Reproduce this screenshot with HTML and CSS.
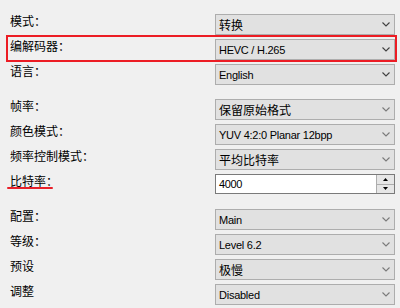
FILE: index.html
```html
<!DOCTYPE html>
<html lang="zh-CN">
<head>
<meta charset="utf-8">
<title>编码设置</title>
<link rel="stylesheet" href="styles.css">
</head>
<body>
<div class="panel">
  <div class="group">
    <div class="row">
      <span class="label">模式：</span>
      <div class="select cjk"><span>转换</span><svg class="chev" viewBox="0 0 8 5"><polyline points="0.5,0.5 4,4 7.5,0.5"/></svg></div>
    </div>
    <div class="row">
      <div class="highlight"></div>
      <span class="label">编解码器：</span>
      <div class="select"><span>HEVC / H.265</span><svg class="chev" viewBox="0 0 8 5"><polyline points="0.5,0.5 4,4 7.5,0.5"/></svg></div>
    </div>
    <div class="row">
      <span class="label">语言：</span>
      <div class="select"><span>English</span><svg class="chev" viewBox="0 0 8 5"><polyline points="0.5,0.5 4,4 7.5,0.5"/></svg></div>
    </div>
  </div>
  <div class="group">
    <div class="row">
      <span class="label">帧率：</span>
      <div class="select cjk dim"><span>保留原始格式</span><svg class="chev" viewBox="0 0 8 5"><polyline points="0.5,0.5 4,4 7.5,0.5"/></svg></div>
    </div>
    <div class="row">
      <span class="label">颜色模式：</span>
      <div class="select dim"><span>YUV 4:2:0 Planar 12bpp</span><svg class="chev" viewBox="0 0 8 5"><polyline points="0.5,0.5 4,4 7.5,0.5"/></svg></div>
    </div>
    <div class="row">
      <span class="label">频率控制模式：</span>
      <div class="select cjk dim"><span>平均比特率</span><svg class="chev" viewBox="0 0 8 5"><polyline points="0.5,0.5 4,4 7.5,0.5"/></svg></div>
    </div>
    <div class="row">
      <span class="label">比特率：</span>
      <div class="underline"></div>
      <div class="spin">
        <span class="spin-value">4000</span>
        <div class="spin-buttons">
          <div class="spin-btn"><svg viewBox="0 0 5 3"><polygon points="0,3 2.5,0 5,3"/></svg></div>
          <div class="spin-btn"><svg viewBox="0 0 5 3"><polygon points="0,0 5,0 2.5,3"/></svg></div>
        </div>
      </div>
    </div>
  </div>
  <div class="group">
    <div class="row">
      <span class="label">配置：</span>
      <div class="select dim"><span>Main</span><svg class="chev" viewBox="0 0 8 5"><polyline points="0.5,0.5 4,4 7.5,0.5"/></svg></div>
    </div>
    <div class="row">
      <span class="label">等级：</span>
      <div class="select dim"><span>Level 6.2</span><svg class="chev" viewBox="0 0 8 5"><polyline points="0.5,0.5 4,4 7.5,0.5"/></svg></div>
    </div>
    <div class="row">
      <span class="label">预设</span>
      <div class="select cjk dim"><span>极慢</span><svg class="chev" viewBox="0 0 8 5"><polyline points="0.5,0.5 4,4 7.5,0.5"/></svg></div>
    </div>
    <div class="row">
      <span class="label">调整</span>
      <div class="select dim"><span>Disabled</span><svg class="chev" viewBox="0 0 8 5"><polyline points="0.5,0.5 4,4 7.5,0.5"/></svg></div>
    </div>
  </div>
</div>
</body>
</html>
```
FILE: styles.css
```css
html, body {
  margin: 0;
  padding: 0;
  background: #f0f0f0;
}
body {
  width: 400px;
  height: 308px;
  overflow: hidden;
  font-family: "Noto Sans CJK SC", "Liberation Sans", sans-serif;
  color: #000;
}
.panel {
  padding: 14px 5px 0 10px;
  display: flex;
  flex-direction: column;
  gap: 14px;
}
.group {
  display: flex;
  flex-direction: column;
  gap: 4px;
}
.row {
  position: relative;
  display: grid;
  grid-template-columns: 205px 180px;
  height: 21px;
}
.label {
  font-size: 12px;
  line-height: 14px;
  padding-top: 0;
  white-space: nowrap;
}
.select {
  box-sizing: border-box;
  height: 21px;
  border: 1px solid #adadad;
  background: #e1e1e1;
  display: flex;
  align-items: center;
  justify-content: space-between;
  padding: 0 4px 0 3px;
  font-family: "Liberation Sans", sans-serif;
  font-size: 11px;
  letter-spacing: -0.25px;
}
.select.cjk {
  font-family: "Noto Sans CJK SC", sans-serif;
  font-size: 12px;
  letter-spacing: 0;
}
.chev {
  width: 8px;
  height: 5px;
  fill: none;
  stroke: #404040;
  stroke-width: 1.1;
  margin-right: 0;
}
.dim .chev {
  stroke: #7a7a7a;
}
.highlight {
  position: absolute;
  left: -4px;
  top: -4px;
  width: 391px;
  height: 27px;
  box-sizing: border-box;
  border: 2px solid #ec1c24;
  pointer-events: none;
}
.underline {
  position: absolute;
  left: -3px;
  top: 13px;
  width: 46px;
  height: 2px;
  border-radius: 1px;
  background: #e8202a;
}
.spin {
  box-sizing: border-box;
  height: 20px;
  border: 1px solid #7a7a7a;
  background: #fff;
  display: flex;
  align-items: center;
  justify-content: space-between;
  padding-left: 3px;
  font-family: "Liberation Sans", sans-serif;
  font-size: 11px;
  letter-spacing: -0.4px;
}
.spin-buttons {
  align-self: stretch;
  width: 17px;
  display: flex;
  flex-direction: column;
  border-left: 1px solid #adadad;
}
.spin-btn {
  flex: 1;
  display: flex;
  align-items: center;
  justify-content: center;
  background: #e6e6e6;
}
.spin-btn + .spin-btn {
  border-top: 1px solid #adadad;
}
.spin-btn svg {
  width: 5px;
  height: 3px;
  fill: #000;
}
```
